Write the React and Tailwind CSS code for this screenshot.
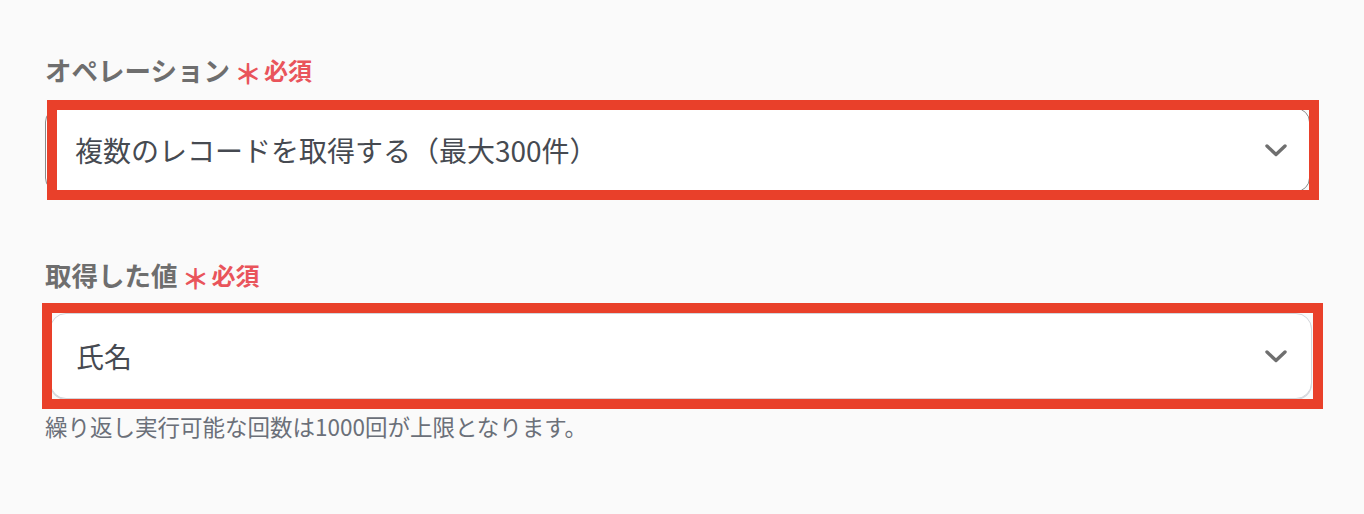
const font = { fontFamily: '"Noto Sans CJK JP", "Noto Sans", sans-serif' }

function Chevron() {
  return (
    <svg width="22" height="13" viewBox="0 0 22 13" fill="none" className="shrink-0">
      <polyline
        points="2,2 11,10.5 20,2"
        stroke="#6f6f6f"
        strokeWidth="3.4"
        strokeLinecap="round"
        strokeLinejoin="round"
      />
    </svg>
  )
}

function FieldLabel({ children }) {
  return (
    <div className="flex items-center h-[30px]">
      <span className="text-[26.5px] leading-[30px] font-bold text-[#6e6e6e]">{children}</span>
      <span className="ml-[4px] mt-[6px] text-[28px] leading-[30px] font-bold text-[#e9545b]">＊</span>
      <span className="ml-[2px] text-[24px] leading-[30px] font-bold text-[#e9545b]">必須</span>
    </div>
  )
}

export default function App() {
  return (
    <div className="min-h-[514px] bg-[#fafafa] pl-[45px] pt-[55px]" style={font}>
      {/* オペレーション */}
      <FieldLabel>オペレーション</FieldLabel>
      <div className="relative mt-[23px] w-[1265px]">
        <div className="flex h-[84px] items-center justify-between rounded-[14px] border border-[#8a8a8a] bg-white pl-[29px] pr-[22px]">
          <span className="text-[28px] text-[#464a51]">複数のレコードを取得する（最大300件）</span>
          <Chevron />
        </div>
        <div className="pointer-events-none absolute left-[2px] top-[-8px] right-[-9px] bottom-[-8px] border-[10px] border-[#e9402a]" />
      </div>

      {/* 取得した値 */}
      <div className="mt-[68px]">
        <FieldLabel>取得した値</FieldLabel>
      </div>
      <div className="relative mt-[23px] ml-[5px] w-[1262px]">
        <div className="flex h-[86px] items-center justify-between rounded-[16px] border border-[#d3d6db] bg-white pl-[25px] pr-[24px] shadow-[0_1px_0_#d3d6db]">
          <span className="text-[28px] text-[#464a51]">氏名</span>
          <Chevron />
        </div>
        <div className="pointer-events-none absolute left-[-8px] top-[-10px] right-[-11px] bottom-[-10px] border-[10px] border-[#e9402a]" />
      </div>
      <p className="mt-[14px] text-[22.5px] leading-[26px] text-[#6b7079]">
        繰り返し実行可能な回数は1000回が上限となります。
      </p>
    </div>
  )
}
